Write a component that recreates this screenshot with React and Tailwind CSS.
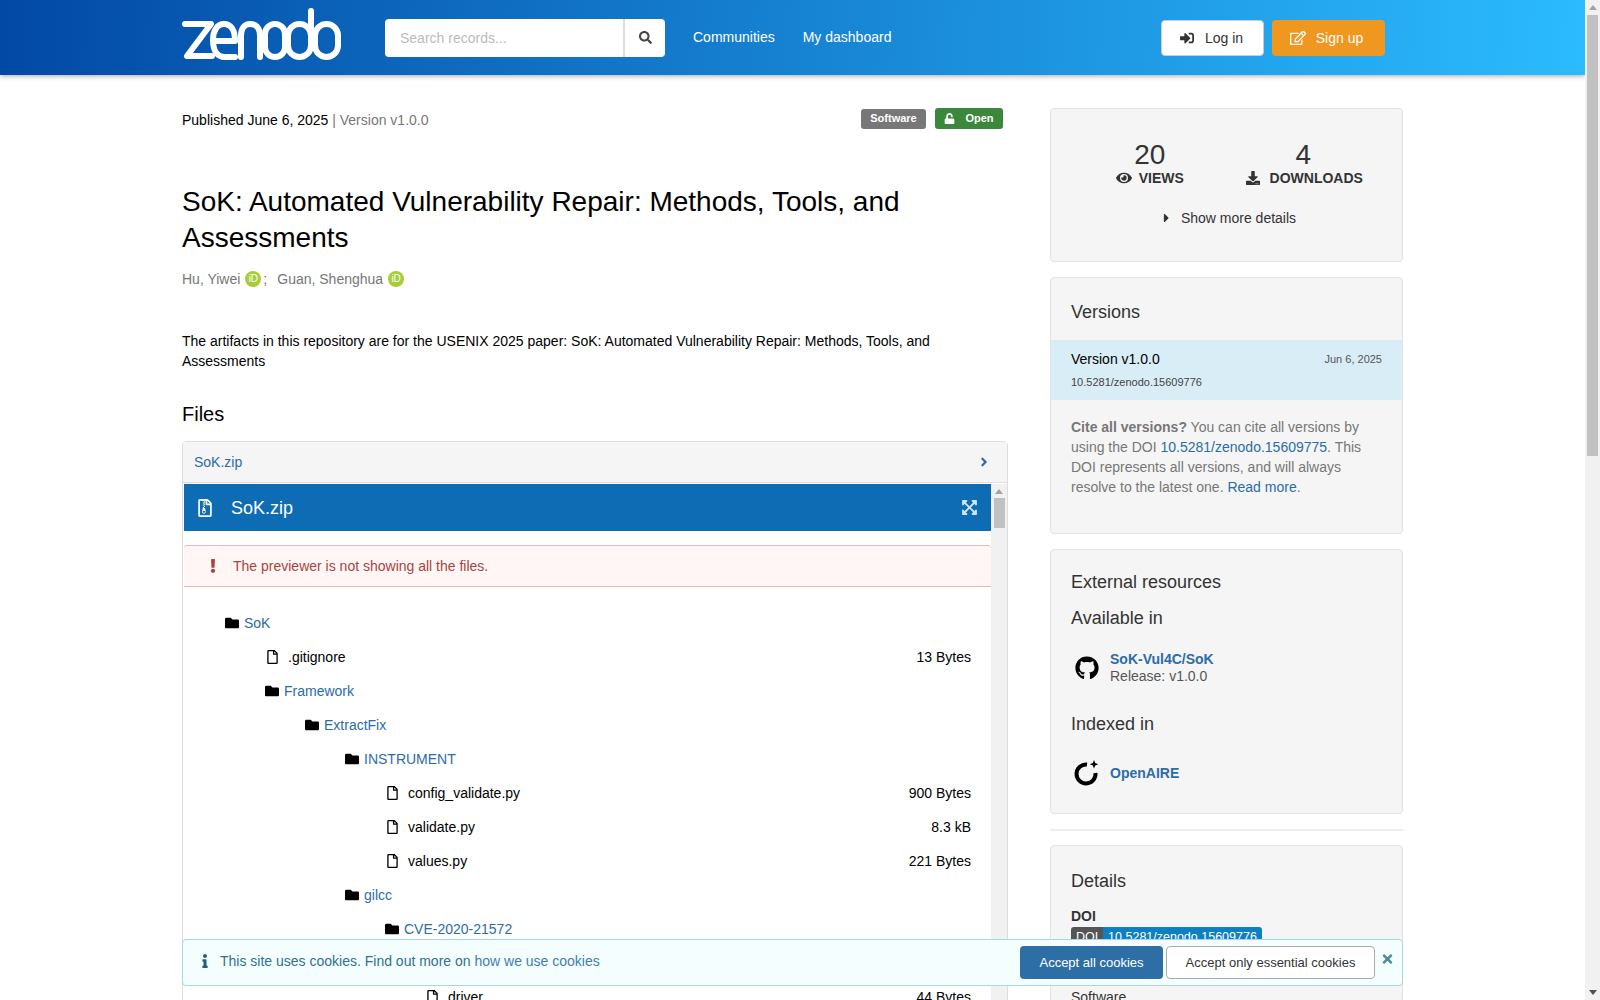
import {
  FaSearch, FaSignInAlt, FaRegEdit, FaUnlock, FaEye, FaDownload, FaCaretRight, FaAngleRight,
  FaRegFileArchive, FaExpandArrowsAlt, FaExclamation, FaFolder, FaRegFile, FaGithub, FaInfo, FaTimes,
} from 'react-icons/fa';

const tree = [
  { level: 0, name: 'SoK', folder: true },
  { level: 1, name: '.gitignore', size: '13 Bytes' },
  { level: 1, name: 'Framework', folder: true },
  { level: 2, name: 'ExtractFix', folder: true },
  { level: 3, name: 'INSTRUMENT', folder: true },
  { level: 4, name: 'config_validate.py', size: '900 Bytes' },
  { level: 4, name: 'validate.py', size: '8.3 kB' },
  { level: 4, name: 'values.py', size: '221 Bytes' },
  { level: 3, name: 'gilcc', folder: true },
  { level: 4, name: 'CVE-2020-21572', folder: true },
  { level: 5, name: '', folder: false, hidden: true },
  { level: 5, name: 'driver', size: '44 Bytes' },
];

function Logo() {
  return (
    <svg width="160" height="52" viewBox="0 0 160 52" fill="none" stroke="white" strokeWidth="6" strokeLinecap="round" strokeLinejoin="round" className="-mt-[7px] shrink-0">
      <path d="M3 16 H29 L5 48 H30" />
      <path d="M32 33 H53 C53 22 49 16 42 16 C35 16 31 23 31 32 C31 42 35 49 43 49 H53" />
      <path d="M59 49 V28 C59 20 63 16 68 16 C74 16 78 20 78 28 V49" />
      <rect x="83" y="16" width="20" height="33" rx="10" />
      <rect x="106" y="16" width="23" height="33" rx="11.5" />
      <path d="M129 3 V38" />
      <rect x="133" y="16" width="23" height="33" rx="11.5" />
    </svg>
  );
}

function Orcid() {
  return (
    <span className="flex h-4 w-4 shrink-0 items-center justify-center rounded-full bg-[#a6ce39] text-[10px] leading-none text-white">iD</span>
  );
}

function OpenAireIcon() {
  return (
    <svg width="26" height="26" viewBox="0 0 26 26" className="shrink-0">
      <path d="M14 4.5 A9.5 9.5 0 1 0 22.5 13" fill="none" stroke="black" strokeWidth="4" />
      <path d="M21 0 L22.2 3 L25.2 4.2 L22.2 5.4 L21 8.4 L19.8 5.4 L16.8 4.2 L19.8 3 Z" fill="black" />
    </svg>
  );
}

function TreeRow({ item }) {
  if (item.hidden) return <div className="h-[34px]"></div>;
  const indent = (item.folder ? 41 : 43) + item.level * 40;
  return (
    <div className="flex h-[34px] items-center justify-between pr-5 text-[14px]" style={{ paddingLeft: indent }}>
      <div className="flex items-center">
        {item.folder ? (
          <>
            <FaFolder className="mr-[5px] h-[14px] w-[14px] text-black" />
            <a className="text-[#2c6ca8]">{item.name}</a>
          </>
        ) : (
          <>
            <FaRegFile className="mr-[10px] h-[14px] w-[11px] text-black" />
            <span className="text-black">{item.name}</span>
          </>
        )}
      </div>
      {item.size && <span className="text-black">{item.size}</span>}
    </div>
  );
}

export default function App() {
  return (
    <div className="relative flex h-screen w-[1600px] overflow-hidden bg-white font-['Liberation_Sans',Arial,sans-serif] text-[14px] leading-5 text-black">
      <div className="w-[1585px] shrink-0">
        <header className="flex h-[75px] items-center bg-[linear-gradient(93deg,#0249a5_0%,#2bbbff_100%)] pl-[182px] shadow-[0_1px_5px_rgba(0,0,0,0.35)]">
          <Logo />
          <div className="ml-[43px] flex h-[38px] w-[280px] overflow-hidden rounded-[4px] bg-white">
            <input placeholder="Search records..." className="w-[240px] border-r-2 border-[#ddd] px-[15px] text-[14px] outline-none placeholder:text-[#bbb]" />
            <div className="flex flex-1 items-center justify-center">
              <FaSearch className="h-[13px] w-[13px] text-[#444]" />
            </div>
          </div>
          <nav className="-mt-[2px] ml-7 flex gap-7 text-white">
            <a>Communities</a>
            <a>My dashboard</a>
          </nav>
          <div className="ml-auto mr-[200px] flex gap-2">
            <button className="flex h-9 w-[103px] items-center justify-center gap-[11px] rounded-[4px] border border-[#ccc] bg-white pr-[2px] text-[#333]">
              <FaSignInAlt className="h-[14px] w-[14px]" />
              Log in
            </button>
            <button className="flex h-9 w-[113px] items-center justify-center gap-[10px] rounded-[4px] bg-[#ef971f] pr-[4px] text-white">
              <FaRegEdit className="h-4 w-4" />
              Sign up
            </button>
          </div>
        </header>

        <div className="flex pl-[182px]">
          <main className="w-[826px] shrink-0">
            <div className="mt-[33px] flex h-[21px] items-center justify-between pr-[5px]">
              <p className="mt-[2px]">
                Published June 6, 2025 <span className="text-[#777]">| Version v1.0.0</span>
              </p>
              <div className="flex items-center gap-[9px] text-[11px] font-bold leading-none text-white">
                <span className="flex h-5 w-[65px] items-center justify-center rounded-[3px] bg-[#777]">Software</span>
                <span className="flex h-[21px] w-[68px] items-center justify-center gap-[10px] rounded-[3px] bg-[#3b873c]">
                  <FaUnlock className="h-[11px] w-[11px]" />
                  Open
                </span>
              </div>
            </div>

            <h1 className="mt-[55px] w-[760px] text-[28px] leading-9">SoK: Automated Vulnerability Repair: Methods, Tools, and Assessments</h1>

            <div className="mt-[13px] flex items-center text-[#777]">
              <span>Hu, Yiwei</span>
              <span className="ml-[5px]"><Orcid /></span>
              <span className="ml-[2px]">;</span>
              <span className="ml-[10px]">Guan, Shenghua</span>
              <span className="ml-[5px]"><Orcid /></span>
            </div>

            <p className="mt-[42px] w-[810px]">The artifacts in this repository are for the USENIX 2025 paper: SoK: Automated Vulnerability Repair: Methods, Tools, and Assessments</p>

            <h2 className="mt-[31px] text-[20px] leading-6">Files</h2>

            <section className="mt-[15px] rounded-t-[4px] border border-[#ddd]">
              <div className="flex h-[41px] items-center justify-between border-b border-[#ddd] bg-[#f5f5f5] px-[11px]">
                <a className="text-[#2c6ca8]">SoK.zip</a>
                <FaAngleRight className="mr-[5px] h-[14px] w-[14px] text-[#2c6ca8]" />
              </div>
              <div className="flex pl-px pt-px">
                <div className="w-[807px]">
                  <div className="flex h-[47px] items-center justify-between bg-[#0e6cb5] pl-[14px] pr-[13px] text-white">
                    <div className="flex items-center gap-[19px] text-[18px]">
                      <FaRegFileArchive className="h-[18px] w-[14px]" />
                      SoK.zip
                    </div>
                    <FaExpandArrowsAlt className="h-[17px] w-[17px] text-[#cfe4f5]" />
                  </div>
                  <div className="mt-[14px] flex h-[42px] items-center rounded-t-[3px] border-y border-[#e8b9b9] bg-[#fff6f5] pl-[26px] text-[#a94442]">
                    <FaExclamation className="h-[14px] w-[6px]" />
                    <span className="ml-[17px]">The previewer is not showing all the files.</span>
                  </div>
                  <div className="mt-[19px]">
                    {tree.map((item, index) => (
                      <TreeRow key={index} item={item} />
                    ))}
                  </div>
                </div>
                <div className="flex w-[16px] flex-col items-center bg-[#f1f1f1]">
                  <span className="mt-[5px] h-0 w-0 border-x-[4px] border-b-[5px] border-x-transparent border-b-[#a3a3a3]"></span>
                  <span className="mt-[4px] h-[30px] w-[11px] bg-[#c1c1c1]"></span>
                </div>
              </div>
            </section>
          </main>

          <aside className="ml-[42px] w-[353px] shrink-0 pt-[33px] text-[#333]">
            <div className="rounded-[4px] border border-[#e3e3e3] bg-[#f5f5f5] pb-[33px] pt-[33px]">
              <div className="grid grid-cols-2 px-[22px] text-center">
                <div>
                  <div className="text-[28px] leading-[26px]">20</div>
                  <div className="flex items-center justify-center gap-[7px] font-bold">
                    <FaEye className="h-4 w-4" />
                    VIEWS
                  </div>
                </div>
                <div>
                  <div className="text-[28px] leading-[26px]">4</div>
                  <div className="flex items-center justify-center gap-[10px] pl-[2px] font-bold">
                    <FaDownload className="h-[14px] w-[14px]" />
                    DOWNLOADS
                  </div>
                </div>
              </div>
              <div className="mt-[20px] flex items-center justify-center gap-[11px] pl-[6px]">
                <FaCaretRight className="h-[14px] w-[7px]" />
                Show more details
              </div>
            </div>

            <div className="mt-[15px] rounded-[4px] border border-[#e3e3e3] bg-[#f5f5f5] pb-[36px] pt-[22px]">
              <h3 className="px-5 text-[18px] leading-6">Versions</h3>
              <div className="mt-[16px] bg-[#d9edf7] px-5 pb-[10px] pt-[9px]">
                <div className="flex items-center justify-between">
                  <span className="text-black">Version v1.0.0</span>
                  <span className="text-[11px] text-[#555]">Jun 6, 2025</span>
                </div>
                <div className="mt-[5px] text-[11px] leading-4 text-[#444]">10.5281/zenodo.15609776</div>
              </div>
              <p className="mt-[17px] px-5 text-[#777]">
                <b className="text-[#777]">Cite all versions?</b> You can cite all versions by using the DOI <a className="text-[#2c6ca8]">10.5281/zenodo.15609775</a>. This DOI represents all versions, and will always resolve to the latest one. <a className="text-[#2c6ca8]">Read more</a>.
              </p>
            </div>

            <div className="mt-[15px] rounded-[4px] border border-[#e3e3e3] bg-[#f5f5f5] px-5 pb-[23px] pt-5">
              <h3 className="text-[18px] leading-6">External resources</h3>
              <h4 className="mt-3 text-[18px] leading-6">Available in</h4>
              <div className="mt-[21px] flex h-[34px] items-center gap-[11px]">
                <FaGithub className="ml-[4px] h-6 w-6 shrink-0 text-black" />
                <div className="leading-[17px]">
                  <a className="block font-bold text-[#2c6ca8]">SoK-Vul4C/SoK</a>
                  <span className="block text-[#555]">Release: v1.0.0</span>
                </div>
              </div>
              <h4 className="mt-[27px] text-[18px] leading-6">Indexed in</h4>
              <div className="mt-[20px] flex h-[34px] items-center gap-[11px]">
                <span className="ml-[2px]"><OpenAireIcon /></span>
                <a className="font-bold text-[#2c6ca8]">OpenAIRE</a>
              </div>
            </div>

            <hr className="mb-[14px] mt-[15px] h-[2px] border-0 bg-[#eee]" />

            <div className="rounded-t-[4px] border border-[#e3e3e3] bg-[#f5f5f5] px-5 pt-[23px]">
              <h3 className="text-[18px] leading-6">Details</h3>
              <div className="mt-[13px] font-bold">DOI</div>
              <div className="mt-px flex h-5 w-[191px] overflow-hidden rounded-[3px] text-[12.5px] leading-5 text-white">
                <span className="w-[32px] bg-[#555] text-center">DOI</span>
                <span className="flex-1 bg-[#0e7fc0] text-center">10.5281/zenodo.15609776</span>
              </div>
              <div className="mt-[13px] font-bold">Resource type</div>
              <div className="mt-[7px]">Software</div>
            </div>
          </aside>
        </div>
      </div>

      <div className="relative flex w-[15px] shrink-0 flex-col items-center bg-[#f1f1f1]">
        <span className="mt-[5px] h-0 w-0 border-x-[4px] border-b-[5px] border-x-transparent border-b-[#a3a3a3]"></span>
        <span className="mt-[5px] h-[441px] w-[11px] bg-[#c1c1c1]"></span>
        <span className="mb-[5px] mt-auto h-0 w-0 border-x-[4px] border-t-[5px] border-x-transparent border-t-[#505050]"></span>
      </div>

      <div className="absolute left-[182px] top-[939px] flex h-[47px] w-[1221px] items-center rounded-[4px] border border-[#a9d6e2] bg-[#f5feff] pl-[19px] pr-[8px] text-[#31708f]">
        <FaInfo className="mb-1 h-[14px] w-[6px] text-[#22607a]" />
        <span className="mb-1 ml-3">This site uses cookies. Find out more on <a className="text-[#3f7fb0]">how we use cookies</a></span>
        <button className="ml-auto h-[33px] w-[143px] rounded-[4px] bg-[#2d6ea6] text-[13px] text-white">Accept all cookies</button>
        <button className="ml-[3px] h-[33px] w-[209px] rounded-[4px] border border-[#aaa] bg-white text-[13px] text-[#333]">Accept only essential cookies</button>
        <FaTimes className="mb-[8px] ml-[6px] h-[14px] w-[13px] text-[#4f8a9c]" />
      </div>
    </div>
  );
}
